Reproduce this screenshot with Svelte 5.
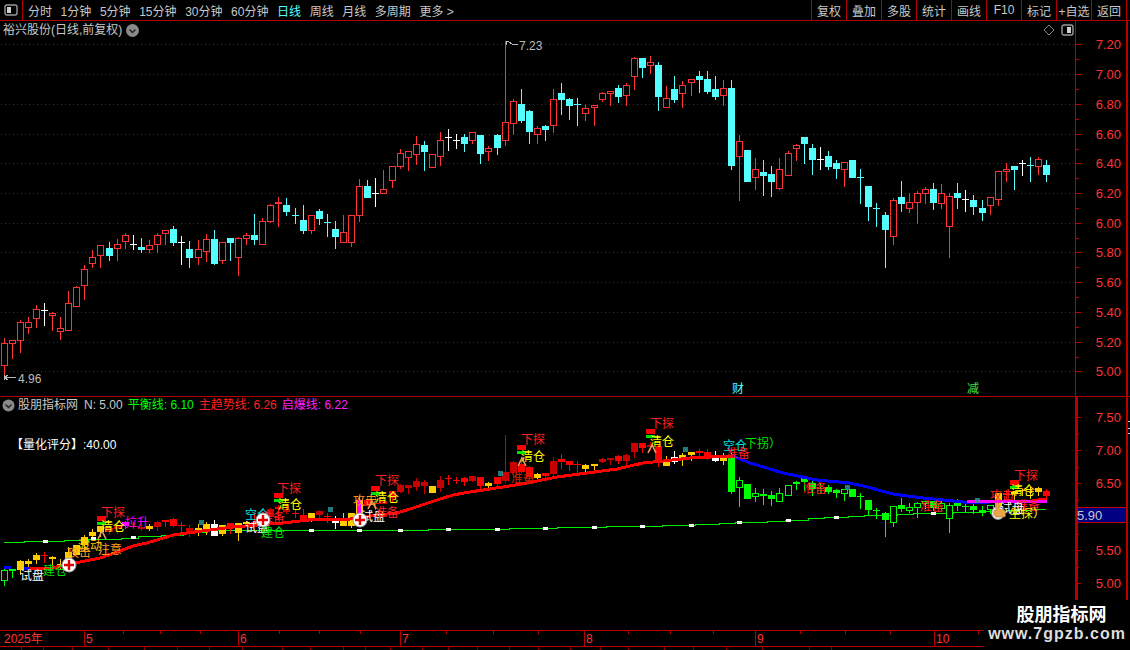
<script>
  const nav = ['分时', '1分钟', '5分钟', '15分钟', '30分钟', '60分钟', '日线', '周线', '月线', '多周期', '更多 >'];
  const actions = ['复权', '叠加', '多股', '统计', '画线', 'F10', '标记', '+自选', '返回'];

  const groups = [
    [0, 200, '13 415 430 497 527 r;37 420 421 430 474 r;61 361 367 422 456 r;85 352 367 383 399 r;109 316 328 356 381 r;133 309 330 330 375 w;157 338 340 347 390 r;181 351 385 395 417 r;205 274 310 392 392 r;229 259 262 320 320 r;253 196 208 257 297 r;277 151 172 191 201 r;301 135 136 167 201 r;328 126 144 165 180 c;352 117 133 146 180 r;376 99 106 125 144 r;400 105 133 133 147 w;424 114 141 147 156 c;448 121 136 149 156 r;472 100 106 134 157 r;496 90 91 100 132 r;520 79 87 126 135 c;544 108 127 127 192 w;568 123 147 171 201 c;595 120 148 173 192 r;619 102 118 155 183 r;643 90 117 189 192 c;667 126 127 182 189 r;691 114 114 126 180 c;715 111 115 173 225 r;739 99 106 116 132 r;763 42 105 117 132 c;787 55 64 134 134 r;811 12 16 65 66 r;835 -9 6 10 78 f;859 -6 15 33 45 c;886 24 45 45 69 c;910 15 60 90 99 c;934 45 46 92 99 r;958 27 33 54 72 c;982 42 66 66 108 c'],
    [330, 150, '16 213 237 258 294 c;40 195 246 278 278 r;64 195 196 278 290 r;88 87 108 197 213 r;112 90 108 141 141 c;136 84 129 129 168 w;160 60 118 129 129 r'],
    [380, 40, '37 378 379 422 441 r;61 328 340 380 386 r;85 334 334 353 392 r;109 288 313 342 374 r;133 304 316 333 392 c;157 342 343 381 383 r;181 277 301 349 375 r;205 267 292 292 330 w;229 282 300 300 324 w;253 282 292 309 333 c;277 277 277 302 309 r;301 285 286 339 369 c;325 318 325 334 360 r;352 282 285 321 342 c;376 3 247 302 315 r;400 178 184 251 282 r;424 147 192 240 246 c;448 210 213 273 309 c;472 258 265 284 309 r;496 255 258 267 300 c;520 147 178 257 276 r;544 129 159 177 222 c;568 174 177 195 237 c;592 174 192 192 255 c;616 195 205 221 240 r;643 195 196 203 255 r;667 156 160 177 183 r;691 153 154 160 195 r;715 135 144 168 186 c;739 129 136 167 195 r;763 52 55 110 147 r;787 54 54 81 111 c;811 48 67 77 99 r;835 66 75 168 210 c;859 138 175 203 203 r;883 108 147 177 186 c;907 123 136 161 201 r;934 118 118 128 165 r;958 93 108 117 156 c;982 93 117 153 159 c;1006 108 147 168 177 c;1030 120 145 167 195 r;1054 120 144 375 387 c;1078 285 304 350 480 r;1102 330 330 423 423 c;1126 354 388 413 447 r'],
    [750, 120, '40 120 156 165 225 c;64 138 162 183 228 c;88 114 148 204 207 r;115 93 99 167 167 r;139 72 76 86 120 r;163 51 51 69 129 c;187 72 84 117 162 c;211 81 118 118 147 w;235 93 108 138 147 c;259 120 129 144 174 c;283 126 127 149 198 r;307 120 120 171 171 c;331 147 172 172 249 c;355 198 198 258 300 c;379 249 265 265 318 c;406 276 285 327 441 c;430 234 241 350 372 r;454 183 231 249 273 c;478 219 247 266 276 r;502 213 220 248 309 r;526 201 208 220 249 r;550 189 207 246 267 c;574 192 220 250 264 r;598 220 229 320 411 r;622 189 219 231 264 c;646 210 238 238 273 w;670 225 240 258 282 c;697 240 264 276 300 c;721 231 232 257 282 r;745 153 154 238 255 r;769 129 148 155 183 r;793 138 138 147 207 c;817 120 129 129 165 w;841 111 135 135 183 c;865 111 118 139 162 r;889 120 135 162 183 c']
  ];

  const candles = groups.flatMap(([ox, oy, rows]) =>
    rows.split(';').map((row) => {
      const [zx, h, t, b, l, kind] = row.split(' ');
      const py = (v) => Math.floor(oy + Number(v) / 3);
      return { x: Math.floor(ox + Number(zx) / 3), h: py(h), t: py(t), b: py(b), l: py(l), kind };
    })
  );

  const mainColor = { r: '#ff3232', f: '#ff3232', c: '#54ffff', w: '#ffffff' };
  const subKinds = 'gGYYYRYYYYYYYDDMRDYDRRRDYYWYRYYRDDRDRRYDRWYYYRRDRDDDDYDRRRDRYRDDRRYRDRRRYYDDRDDRDRYWYYRRWYGgGgGGggGGGGGGgGGGGGgGgggGggGGGGgYRYYYYR';
  const subColor = { g: '#00ff00', G: '#00ff00', Y: '#ffcc00', R: '#ff0000', D: '#c80000', M: '#ff00ff', W: '#ffffff' };
  const sy = (y) => Math.round(450.3 + (y - 74.3) * 0.4463);

  const subCandles = candles.map((c, i) => {
    const k = subKinds[i] || 'G';
    const t = sy(c.t);
    const b = sy(c.b);
    return { x: c.x, h: sy(c.h), l: sy(c.l), t, b, flat: c.t === c.b, hollow: k === 'g', color: subColor[k] };
  });

  const mainGrid = [44, 74, 104, 134, 163, 193, 223, 252, 282, 312, 342, 371];
  const mainPrices = ['7.20', '7.00', '6.80', '6.60', '6.40', '6.20', '6.00', '5.80', '5.60', '5.40', '5.20', '5.00'];
  const mainMinor = mainGrid.slice(0, -1).map((y, i) => Math.round((y + mainGrid[i + 1]) / 2));
  const subGrid = [417, 450, 483, 517, 550, 583];
  const subPrices = ['7.50', '7.00', '6.50', '6.00', '5.50', '5.00'];
  const subMinor = subGrid.slice(0, -1).map((y, i) => Math.round((y + subGrid[i + 1]) / 2));

  const balanceSteps = [[4,542],[24,541],[64,540],[88,539],[121,538],[138,536],[161,535],[183,532],[207,530],[428,529],[509,528],[557,527],[606,526],[662,525],[695,524],[719,523],[735,522],[767,521],[785,520],[808,518],[824,517],[848,516],[864,515],[897,514],[913,513],[953,512],[983,511],[1006,510],[1030,509],[1046,509]];
  const balancePath = balanceSteps.map(([x, y], i) => (i ? `H${x}V${y}.5` : `M${x} ${y}.5`)).join('');
  const dashes = [[45,541],[93,538],[133,537],[182,533],[311,530],[359,530],[400,530],[448,529],[497,529],[545,528],[594,527],[642,526],[691,525],[739,522],[788,520],[836,517],[933,513]];

  const trend = '30,569 52,568 80,562 100,558 117,552 133,546 147,543 160,539 173,535 187,533 233,527 283,523 317,519 350,519 377,515 397,513 413,508 437,500 453,495 470,492 503,487 527,483 557,477 587,473 617,469 643,463 663,461 690,458 733,456';
  const fall = '733,456 750,463 767,468 783,473 817,480 850,483 867,487 893,494 923,498 963,502 990,503';

  const labels = [
    [32, 575, '试盘', '#ffffff'], [55, 570, '建仓', '#00e000'], [79, 552, '攻击', '#ff9a20'], [90, 545, '波动', '#ffcc00'],
    [110, 549, '注意', '#ffa020'], [113, 512, '下探', '#ff2020'], [113, 526, '清仓', '#ffff00'], [137, 522, '拉升', '#ff00ff'],
    [257, 514, '空仓', '#00e0e0'], [257, 527, '试盘', '#ffffff'], [273, 532, '建仓', '#00e000'], [273, 517, '准备', '#ff2020'],
    [289, 488, '下探', '#ff2020'], [290, 504, '清仓', '#ffff00'], [365, 500, '攻击', '#ff9a20'], [373, 516, '试盘', '#ffffff'],
    [387, 480, '下探', '#ff2020'], [387, 497, '清仓', '#ffff00'], [387, 512, '准备', '#ff2020'], [523, 478, '准备', '#d02000'],
    [533, 439, '下探', '#ff2020'], [533, 456, '清仓', '#ffff00'], [662, 423, '下探', '#ff2020'], [662, 441, '清仓', '#ffff00'],
    [735, 445, '空仓', '#00e0e0'], [763, 443, '下拐）', '#00e000'], [738, 453, '准备', '#ff2020'], [815, 488, '准备', '#ff2020'],
    [932, 506, '准备', '#ff2020'], [1002, 495, '攻击', '#ff2020'], [1023, 490, '清仓', '#ffff00'], [1026, 475, '下探', '#ff2020'],
    [1028, 505, '准备', '#ff2020'], [1012, 508, '试盘', '#ffffff'], [1027, 513, '坐探）', '#ffff00']
  ];
  const markers = [[97, 516], [274, 493], [371, 486], [517, 445], [646, 429], [1010, 480]];
  const pluses = [[69, 565], [263, 520], [360, 520]];
  const rockets = [[102, 535], [372, 505], [522, 462], [652, 449]];
  const checks = [[201, 522], [330, 509], [500, 473], [685, 449], [847, 487], [977, 500]];

  const majorTimes = [[84, '5'], [238, '6'], [400, '7'], [584, '8'], [755, '9'], [934, '10']];
  const minorTimes = [123, 160, 200, 279, 319, 360, 446, 493, 538, 628, 670, 713, 800, 845, 890, 978];
  const strip = [21, 43, 72, 108, 144, 177, 209, 242, 282, 310, 343, 365, 390, 422, 448, 477, 509, 538, 570, 600, 628, 664, 693, 726, 762, 809, 831];
</script>

<div class="screen">
  <header class="topbar">
    <div class="layout-btn">
      <svg width="14" height="12" viewBox="0 0 14 12"><rect x="1" y="1" width="12" height="10" rx="2" class="ico"/><rect x="3" y="3" width="4" height="6" class="ico-fill"/></svg>
    </div>
    <nav class="nav">
      {#each nav as item}
        <span class:active={item === '日线'}>{item}</span>
      {/each}
    </nav>
    <div class="actions">
      {#each actions as item}
        <button>{item}</button>
      {/each}
    </div>
  </header>

  <section class="panel main-panel">
    <div class="chart">
      <div class="title">
        <span>裕兴股份(日线,前复权)</span>
        <svg width="13" height="13" viewBox="0 0 13 13"><circle cx="6.5" cy="6.5" r="6.5" fill="#8a8a8a"/><path d="M3.5 5.5l3 3 3-3" fill="none" stroke="#222" stroke-width="1.4"/></svg>
      </div>
      <div class="corner">
        <svg width="12" height="12" viewBox="0 0 12 12"><path d="M6 1l5 5-5 5-5-5z" fill="none" stroke="#888"/></svg>
        <svg width="13" height="12" viewBox="0 0 13 12"><rect x="1" y="1" width="11" height="10" rx="2" class="ico"/><rect x="6" y="3" width="4" height="6" class="ico-fill"/></svg>
      </div>
      <svg class="plot" width="1075" height="375" viewBox="0 21 1075 375" shape-rendering="crispEdges">
        {#each mainGrid as y}
          <line x1="1" x2="1075" y1={y + 0.5} y2={y + 0.5} stroke="#a00000" stroke-dasharray="1 3"/>
        {/each}
        {#each candles as c}
          <line x1={c.x + 0.5} x2={c.x + 0.5} y1={c.h} y2={c.l + 1} stroke={mainColor[c.kind]}/>
          {#if c.t === c.b}
            <rect x={c.x - 3} y={c.t} width="7" height="1" fill={mainColor[c.kind]}/>
          {:else if c.kind === 'r'}
            <rect x={c.x - 2.5} y={c.t + 0.5} width="6" height={c.b - c.t} fill="#000" stroke="#ff3232"/>
          {:else}
            <rect x={c.x - 3} y={c.t} width="7" height={c.b - c.t + 1} fill={mainColor[c.kind]}/>
          {/if}
        {/each}
        <path d="M506 41.5h3M506.5 41v4M509 42l3 2h6" fill="none" stroke="#bbb"/>
        <path d="M4 377.5h12M4.5 375v5M5 377l3-2M5 378l3 2" fill="none" stroke="#bbb"/>
        <text x="519" y="50" class="tag">7.23</text>
        <text x="18" y="383" class="tag">4.96</text>
        <text x="738" y="393" class="fin cyan">财</text>
        <text x="973" y="393" class="fin green">减</text>
      </svg>
    </div>
    <svg class="axis" width="55" height="375" viewBox="1075 21 55 375" shape-rendering="crispEdges">
      <line x1="1075.5" x2="1075.5" y1="21" y2="396" class="red"/>
      <line x1="1126.5" x2="1126.5" y1="21" y2="396" class="red" stroke-width="2"/>
      {#each mainGrid as y, i}
        <line x1="1076" x2="1081" y1={y + 0.5} y2={y + 0.5} class="red"/>
        <text x="1121" y={y + 5} class="price">{mainPrices[i]}</text>
      {/each}
      {#each mainMinor as y}
        <line x1="1076" x2="1079" y1={y + 0.5} y2={y + 0.5} class="red"/>
      {/each}
    </svg>
  </section>

  <section class="panel sub-panel">
    <div class="chart">
      <div class="legend">
        <svg width="13" height="13" viewBox="0 0 13 13"><circle cx="6.5" cy="6.5" r="6" fill="#8a8a8a"/><path d="M3.5 5.5l3 3 3-3" fill="none" stroke="#222" stroke-width="1.4"/></svg>
        <span class="name">股朋指标网</span>
        <span>N: 5.00</span>
        <span class="g">平衡线: 6.10</span>
        <span class="r">主趋势线: 6.26</span>
        <span class="m">启爆线: 6.22</span>
      </div>
      <div class="score">【量化评分】:40.00</div>
      <svg class="plot" width="1075" height="233" viewBox="0 397 1075 233" shape-rendering="crispEdges">
        <path d={balancePath} fill="none" stroke="#00ee00"/>
        {#each subCandles as c}
          <line x1={c.x + 0.5} x2={c.x + 0.5} y1={c.h} y2={c.l + 1} stroke={c.color}/>
          {#if c.flat}
            <rect x={c.x - 3} y={c.t} width="7" height="1" fill={c.color}/>
          {:else if c.hollow}
            <rect x={c.x - 2.5} y={c.t + 0.5} width="6" height={Math.max(2, c.b - c.t)} fill="#000" stroke={c.color}/>
          {:else}
            <rect x={c.x - 3} y={c.t} width="7" height={Math.max(2, c.b - c.t + 1)} fill={c.color}/>
          {/if}
        {/each}
        {#each dashes as [x, y]}
          <rect x={x - 2} y={y - 1} width="5" height="3" fill="#fff"/>
        {/each}
        <rect x="4" y="566" width="7" height="3" fill="#0000ff"/>
        <rect x="24" y="567" width="7" height="3" fill="#0000ff"/>
        <polyline points={trend} fill="none" stroke="#ff0000" stroke-width="3"/>
        <polyline points={fall} fill="none" stroke="#0000ff" stroke-width="3"/>
        <polyline points="967,501.5 1047,501.5" fill="none" stroke="#ff00ff" stroke-width="3"/>
        <polyline points="1033,500 1047,498.5" fill="none" stroke="#ff0000" stroke-width="2"/>
        <rect x="357" y="500" width="4" height="15" fill="#ff00ff"/>
        {#each checks as [x, y]}
          <rect x={x - 2} y={y - 2} width="5" height="5" fill="#2a9a9a" opacity="0.8"/>
        {/each}
        {#each markers as [x, y]}
          <rect {x} {y} width="9" height="5" fill="#ff0000"/>
          <rect {x} y={y + 6} width="9" height="3" fill="#00e000"/>
        {/each}
        {#each labels as [x, y, text, color]}
          <text {x} y={y + 4.5} class="mark" fill={color}>{text}</text>
        {/each}
        <g shape-rendering="auto">
          {#each rockets as [x, y]}
            <path d={`M${x - 4} ${y + 4}L${x} ${y - 4}L${x + 4} ${y + 4}`} fill="none" stroke="#e8a060" stroke-width="1.6"/>
          {/each}
          {#each pluses as [x, y]}
            <circle cx={x} cy={y} r="7" fill="#fff" stroke="#999"/>
            <path d={`M${x - 5} ${y}h10M${x} ${y - 5}v10`} stroke="#e00000" stroke-width="2.4"/>
          {/each}
          <circle cx="998" cy="513" r="6.5" fill="#eee" stroke="#888"/>
          <path d="M996 517c-3-3-3-6-1-7l1 1v-7c0-2 3-2 3 0v5l5 1c2 1 2 4 1 7z" fill="#eca64a" stroke="#a86a20" stroke-width="0.5"/>
        </g>
      </svg>
    </div>
    <svg class="axis" width="55" height="233" viewBox="1075 397 55 233" shape-rendering="crispEdges">
      <line x1="1076" x2="1076" y1="397" y2="630" class="red" stroke-width="3"/>
      <line x1="1126.5" x2="1126.5" y1="397" y2="630" class="red" stroke-width="2"/>
      {#each subGrid as y, i}
        <line x1="1076" x2="1081" y1={y + 0.5} y2={y + 0.5} class="red"/>
        <text x="1121" y={y + 5} class="price">{subPrices[i]}</text>
      {/each}
      {#each subMinor as y}
        <line x1="1076" x2="1079" y1={y + 0.5} y2={y + 0.5} class="red"/>
      {/each}
      <rect x="1077.5" y="507.5" width="49" height="15" fill="#000080" stroke="#c00000"/>
      <text x="1077" y="520" class="last">5.90</text>
      <rect x="1128" y="421" width="2" height="1" fill="#ccc"/>
      <rect x="1128" y="428" width="2" height="1" fill="#ccc"/>
      <rect x="1128" y="433" width="2" height="1" fill="#ccc"/>
    </svg>
  </section>

  <footer class="timeline">
    <svg width="1130" height="15" viewBox="0 631 1130 15" shape-rendering="crispEdges">
      <text x="4" y="643" class="time">2025年</text>
      {#each majorTimes as [x, label]}
        <line x1={x + 0.5} x2={x + 0.5} y1="631" y2="646" class="red"/>
        <text x={x + 2} y="643" class="time">{label}</text>
      {/each}
      {#each minorTimes as x}
        <line x1={x + 0.5} x2={x + 0.5} y1="631" y2="634" class="red"/>
      {/each}
    </svg>
  </footer>
  <div class="strip">
    {#each strip as x}
      <i style="left:{x}px"></i>
    {/each}
  </div>

  <aside class="watermark">
    <strong>股朋指标网</strong>
    <span>www.7gpzb.com</span>
  </aside>
</div>

<style>
  :global(body) { margin: 0; background: #000; }
  .screen {
    position: relative;
    width: 1130px;
    height: 650px;
    overflow: hidden;
    background: #000;
    color: #c8c8c8;
    font: 12px "Liberation Sans", "Noto Sans CJK SC", sans-serif;
  }
  .topbar {
    display: flex;
    align-items: stretch;
    height: 20px;
    border-bottom: 1px solid #b00000;
  }
  .layout-btn {
    display: flex;
    align-items: center;
    justify-content: center;
    width: 23px;
    border-right: 1px solid #b00000;
    box-sizing: border-box;
  }
  .ico { fill: none; stroke: #9a9a9a; stroke-width: 1.4; }
  .ico-fill { fill: #d0d0d0; }
  .nav {
    display: flex;
    align-items: center;
    gap: 8.6px;
    margin-left: 5px;
    white-space: nowrap;
  }
  .nav .active { color: #54ffff; }
  .actions { display: flex; margin-left: auto; margin-right: 3px; border-right: 1px solid #b00000; }
  .actions button {
    width: 35px;
    padding: 0;
    background: none;
    border: 0;
    border-left: 1px solid #b00000;
    color: #c8c8c8;
    font: inherit;
    white-space: nowrap;
  }
  .panel { display: flex; }
  .main-panel { height: 375px; border-bottom: 1px solid #b00000; }
  .sub-panel { height: 233px; }
  .chart { position: relative; width: 1075px; flex: none; }
  .plot, .axis { display: block; }
  .axis { flex: none; }
  .title {
    position: absolute;
    top: 1px;
    left: 3px;
    display: flex;
    align-items: center;
    gap: 4px;
    line-height: 16px;
    z-index: 1;
  }
  .corner {
    position: absolute;
    top: 3px;
    right: 1px;
    display: flex;
    align-items: center;
    gap: 6px;
    z-index: 1;
  }
  .legend {
    position: absolute;
    top: 1px;
    left: 2px;
    display: flex;
    align-items: center;
    gap: 5px;
    line-height: 14px;
    white-space: nowrap;
    z-index: 1;
  }
  .legend .name { margin-left: -2px; margin-right: 1px; }
  .legend .g { color: #00ff00; }
  .legend .r { color: #ff2020; }
  .legend .m { color: #ff20ff; }
  .score {
    position: absolute;
    top: 41px;
    left: 11px;
    color: #fff;
    line-height: 14px;
    white-space: nowrap;
    z-index: 1;
  }
  .red { stroke: #b80000; }
  .price {
    fill: #ff3232;
    text-anchor: end;
    font: 13px "Liberation Sans", sans-serif;
  }
  .tag { fill: #bdbdbd; font: 12px "Liberation Sans", sans-serif; }
  .last { fill: #c8c8c8; font: 13px "Liberation Sans", sans-serif; }
  .time { fill: #ff3232; font: 12px "Liberation Sans", "Noto Sans CJK SC", sans-serif; }
  .mark { text-anchor: middle; font: 12px "Noto Sans CJK SC", sans-serif; }
  .fin { text-anchor: middle; font: 12px "Noto Sans CJK SC", sans-serif; }
  .cyan { fill: #54ffff; }
  .green { fill: #40e040; }
  .timeline { height: 15px; border-top: 1px solid #b80000; border-bottom: 1px solid #b80000; }
  .timeline svg { display: block; }
  .strip { position: relative; height: 3px; }
  .strip i { position: absolute; top: 0; width: 1px; height: 3px; background: #8a0000; }
  .watermark {
    position: absolute;
    left: 984px;
    top: 600px;
    width: 146px;
    height: 50px;
    display: flex;
    flex-direction: column;
    align-items: center;
    background: #000;
    color: #fff;
    z-index: 2;
  }
  .watermark strong { margin: 2px 0 0 9px; font: bold 18px/22px "Noto Sans CJK SC", sans-serif; }
  .watermark span { font: bold 16px/20px "Liberation Sans", sans-serif; letter-spacing: 1px; color: #ddd; }
</style>
